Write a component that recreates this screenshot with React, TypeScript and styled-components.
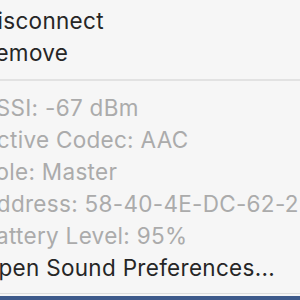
import React from "react";
import styled, { createGlobalStyle } from "styled-components";

const Global = createGlobalStyle`
  html, body { margin: 0; padding: 0; background: #f6f6f6; }
  #root { width: 300px; height: 300px; overflow: hidden; }
`;

const Screen = styled.div`
  width: 300px;
  height: 300px;
  overflow: hidden;
  display: flex;
  flex-direction: column;
  background: #f6f6f6;
  font-family: Inter, "Noto Sans", "Liberation Sans", sans-serif;
`;

const Menu = styled.div`
  display: flex;
  flex-direction: column;
  padding-top: 5px;
  margin-left: -19px;
  flex: 1;
`;

const Item = styled.div<{ $disabled?: boolean }>`
  height: 32px;
  line-height: 32px;
  font-size: 22.5px;
  letter-spacing: 0.3px;
  white-space: nowrap;
  color: ${(p) => (p.$disabled ? "#ababab" : "#262626")};
`;

const Separator = styled.div`
  height: 2px;
  margin: 10px 0 11px 19px;
  background: #e2e2e2;
`;

const Rule = styled.div`
  height: 1px;
  background: #dddddd;
  margin-bottom: 2px;
`;

const Desktop = styled.div`
  height: 4px;
  background: #3e5a8b;
`;

const info = [
  "RSSI: -67 dBm",
  "Active Codec: AAC",
  "Role: Master",
  "Address: 58-40-4E-DC-62-2F",
  "Battery Level: 95%",
];

export default function App() {
  return (
    <>
      <Global />
      <Screen>
        <Menu>
          <Item>Disconnect</Item>
          <Item>Remove</Item>
          <Separator />
          {info.map((t) => (
            <Item key={t} $disabled>
              {t}
            </Item>
          ))}
          <Item>Open Sound Preferences...</Item>
        </Menu>
        <Rule />
        <Desktop />
      </Screen>
    </>
  );
}
